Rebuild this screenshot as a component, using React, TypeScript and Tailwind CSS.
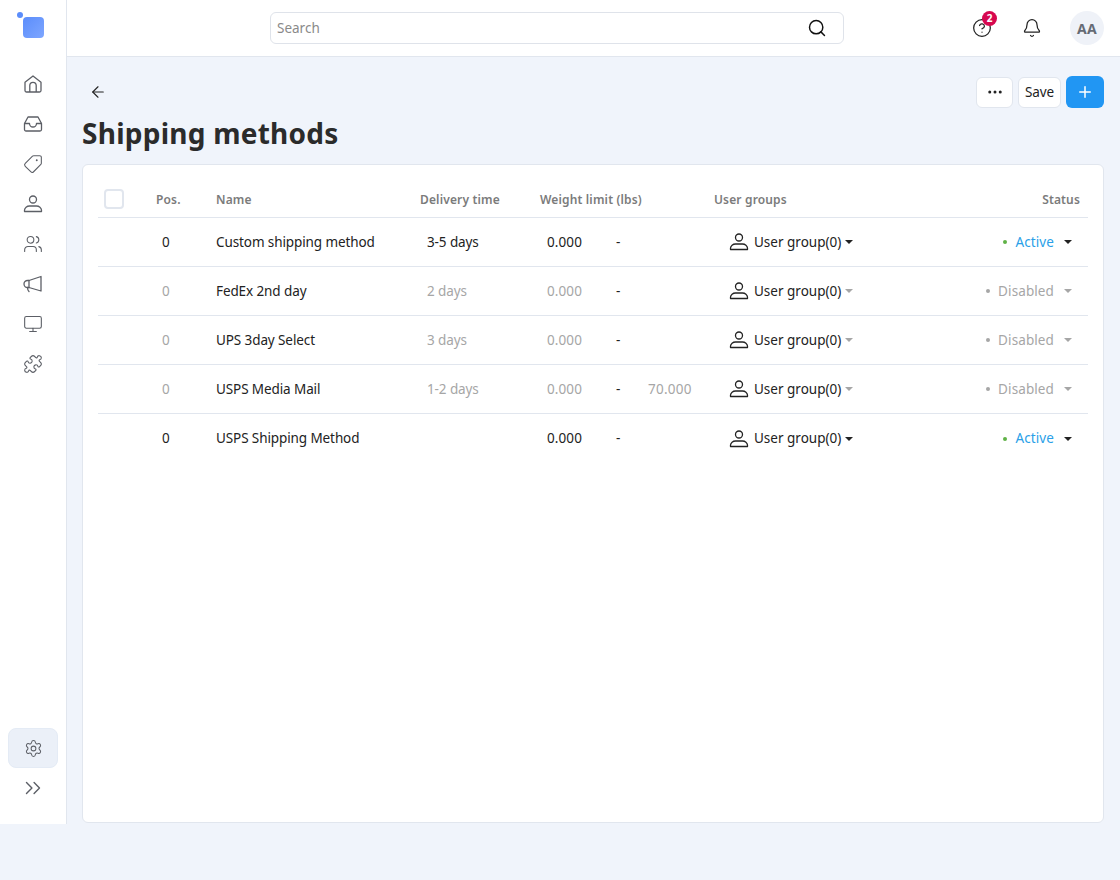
import React from 'react';
import { ArrowLeft, Bell, ChevronsRight, CircleHelp, Ellipsis, Monitor, Plus, Puzzle, Search, Settings, Tag, Users } from 'lucide-react';

const HomeIcon = () => (
  <svg width="20" height="20" viewBox="0 0 20 20" fill="none" stroke="currentColor" strokeWidth="1.3" strokeLinejoin="round">
    <path d="M2 8.200 10 2l8 6.200v8.300a1.500 1.500 0 0 1-1.500 1.500h-13A1.500 1.500 0 0 1 2 16.500z" />
    <path d="M6.800 18v-6.500a3.200 3.200 0 0 1 6.400 0V18" />
  </svg>
);

const InboxIcon = () => (
  <svg width="20" height="20" viewBox="0 0 20 20" fill="none" stroke="currentColor" strokeWidth="1.3" strokeLinejoin="round">
    <path d="M1.500 9.500 5 3h10l3.500 6.500v6A1.500 1.500 0 0 1 17 17H3a1.500 1.500 0 0 1-1.500-1.500z" />
    <path d="M1.500 9.500H6.500a3.500 3.500 0 0 0 7 0h5" />
  </svg>
);

const UserIcon = ({ size = 20 }: { size?: number }) => (
  <svg width={size} height={size} viewBox="0 0 20 20" fill="none" stroke="currentColor" strokeWidth="1.3" strokeLinejoin="round">
    <circle cx="10" cy="5.500" r="3.500" />
    <path d="M1.500 17.500v-1.200c0-2.500 2.500-4.300 5-4.300h7c2.500 0 5 1.800 5 4.300v1.200z" />
  </svg>
);

const MegaphoneIcon = () => (
  <svg width="20" height="20" viewBox="0 0 20 20" fill="none" stroke="currentColor" strokeWidth="1.3" strokeLinejoin="round" strokeLinecap="round">
    <path d="M18 2.500v14.500L6 13.500H4.500a3 3 0 0 1 0-7H6z" />
    <path d="M6 6.500v7" />
    <path d="M4.500 13.500c0 1.500.5 3 1.500 4" />
  </svg>
);

const Logo = () => (
  <div className="relative h-[21px] w-[21px] rounded-[4px] bg-gradient-to-br from-[#5b8dfb] to-[#7ea6ff]">
    <div className="absolute left-[-6px] top-[-5px] h-[6px] w-[6px] rounded-full bg-[#5b8dfb]" />
  </div>
);

const sideIcons = [
  <HomeIcon />,
  <InboxIcon />,
  <Tag size={20} strokeWidth={1.3} className="rotate-90" />,
  <UserIcon />,
  <Users size={20} strokeWidth={1.3} />,
  <MegaphoneIcon />,
  <Monitor size={20} strokeWidth={1.3} />,
  <Puzzle size={20} strokeWidth={1.3} />,
];

type Row = {
  name: string;
  time: string;
  limit?: string;
  active: boolean;
};

const rows: Row[] = [
  { name: 'Custom shipping method', time: '3-5 days', active: true },
  { name: 'FedEx 2nd day', time: '2 days', active: false },
  { name: 'UPS 3day Select', time: '3 days', active: false },
  { name: 'USPS Media Mail', time: '1-2 days', limit: '70.000', active: false },
  { name: 'USPS Shipping Method', time: '', active: true },
];

const Caret = ({ className }: { className: string }) => (
  <span className={`h-0 w-0 border-x-[4px] border-t-[4px] border-x-transparent ${className}`} />
);

const ShippingRow = ({ row, last }: { row: Row; last: boolean }) => {
  const muted = row.active ? 'text-[#222222]' : 'text-[#a6a6a6]';
  const caret = row.active ? 'border-t-[#222222]' : 'border-t-[#a6a6a6]';
  return (
    <div className={`grid h-[49px] grid-cols-[58px_60px_204px_120px_174px_150px_1fr] items-center text-[13.5px] tracking-[-0.1px] ${last ? '' : 'border-b border-[#e1e6ee]'}`}>
      <div />
      <div className={`pl-[6px] ${muted}`}>0</div>
      <div className="text-[#222222]">{row.name}</div>
      <div className={`pl-[7px] ${muted}`}>{row.time}</div>
      <div className="relative flex items-center pl-[7px] tracking-[0.1px]">
        <span className={`w-[69px] ${muted}`}>0.000</span>
        <span className="text-[#222222]">-</span>
        {row.limit && <span className={`absolute left-[108px] tracking-[0.25px] ${muted}`}>{row.limit}</span>}
      </div>
      <div className="flex items-center pl-[15px] tracking-normal text-[#222222]">
        <UserIcon />
        <span className="ml-[5px]">User group(0)</span>
        <Caret className={`ml-[4px] ${caret}`} />
      </div>
      <div className="flex items-center justify-end pr-[16px] tracking-[0.1px]">
        <span className={`mr-[8px] h-[4px] w-[4px] rounded-full ${row.active ? 'bg-[#5fb246]' : 'bg-[#a6a6a6]'}`} />
        <span className={row.active ? 'text-[#2a9fe8]' : 'text-[#a6a6a6]'}>{row.active ? 'Active' : 'Disabled'}</span>
        <Caret className={`ml-[10px] ${caret}`} />
      </div>
    </div>
  );
};

export default function App() {
  return (
    <div className="flex h-[880px] w-[1120px] items-start overflow-hidden bg-[#f0f4fb] font-['Noto_Sans',sans-serif]">
      <aside className="flex h-[824px] w-[67px] shrink-0 flex-col items-center border-r border-[#e1e6ee] bg-white text-[#5c5f66]">
        <div className="ml-[1px] mt-[17px]"><Logo /></div>
        <div className="mt-[26px] flex flex-col">
          {sideIcons.map((icon, i) => (
            <div key={i} className="flex h-[40px] w-[50px] items-center justify-center">{icon}</div>
          ))}
        </div>
        <div className="mt-auto flex h-[40px] w-[50px] items-center justify-center rounded-lg border border-[#e4ebf5] bg-[#ebf0f8]">
          <Settings size={19} strokeWidth={1.3} />
        </div>
        <div className="mb-[26px] mt-[10px] flex h-[20px] items-center">
          <ChevronsRight size={26} strokeWidth={1.3} />
        </div>
      </aside>

      <div className="flex min-w-0 flex-1 flex-col">
        <header className="flex h-[57px] items-center border-b border-[#e1e6ee] bg-white pl-[203px] pr-[16px]">
          <div className="flex h-[32px] w-[574px] items-center justify-between rounded-md border border-[#dfe3ea] pl-[6px] pr-[16px]">
            <span className="text-[13.5px] text-[#8a8a8a]">Search</span>
            <Search size={20} strokeWidth={1.75} className="text-[#111111]" />
          </div>
          <div className="relative ml-[128px] flex h-[20px] w-[20px] items-center justify-center text-[#222222]">
            <CircleHelp size={20} strokeWidth={1.5} />
            <span className="absolute left-[10px] top-[-7px] flex h-[15px] w-[15px] items-center justify-center rounded-full bg-[#d6084f] text-[10px] font-bold text-white">2</span>
          </div>
          <Bell size={20} strokeWidth={1.5} className="ml-[30px] text-[#222222]" />
          <div className="ml-[28px] flex h-[34px] w-[34px] items-center justify-center rounded-full bg-[#eff2f8] text-[14px] font-bold tracking-wide text-[#666b75]">AA</div>
        </header>

        <main className="flex flex-col pl-[15px] pr-[16px]">
          <div className="flex items-start justify-between pt-[19px]">
            <div className="ml-[7px] mt-[7px] text-[#222222]"><ArrowLeft size={18} strokeWidth={1.5} /></div>
            <div className="flex items-center">
              <button className="flex h-[31px] w-[37px] items-center justify-center rounded-md border border-[#e1e6ee] bg-white text-[#222222]"><Ellipsis size={18} strokeWidth={2} /></button>
              <button className="ml-[5px] flex h-[31px] w-[43px] items-center justify-center rounded-md border border-[#e1e6ee] bg-white text-[13.5px] tracking-[-0.15px] text-[#222222]">Save</button>
              <button className="ml-[5px] flex h-[32px] w-[38px] items-center justify-center rounded-md bg-[#2196f3] text-white"><Plus size={18} strokeWidth={2} /></button>
            </div>
          </div>
          <h1 className="mt-[6px] h-[38px] text-[28px] font-bold leading-[38px] tracking-[0.25px] text-[#2b2b2b]">Shipping methods</h1>
          <div className="mt-[12px] h-[659px] rounded-md border border-[#e1e6ee] bg-white px-[15px] pt-[17px]">
            <div className="grid h-[36px] grid-cols-[58px_60px_204px_120px_174px_150px_1fr] items-center border-b border-[#e1e6ee] text-[12px] font-semibold tracking-[0.15px] text-[#7b7b7b]">
              <div className="pb-[2px] pl-[6px]"><div className="h-[20px] w-[20px] rounded-[4px] border-2 border-[#e1e6ee]" /></div>
              <div>Pos.</div>
              <div>Name</div>
              <div>Delivery time</div>
              <div>Weight limit (lbs)</div>
              <div>User groups</div>
              <div className="pr-[8px] text-right">Status</div>
            </div>
            {rows.map((row, i) => (
              <ShippingRow key={row.name} row={row} last={i === rows.length - 1} />
            ))}
          </div>
        </main>
      </div>
    </div>
  );
}
